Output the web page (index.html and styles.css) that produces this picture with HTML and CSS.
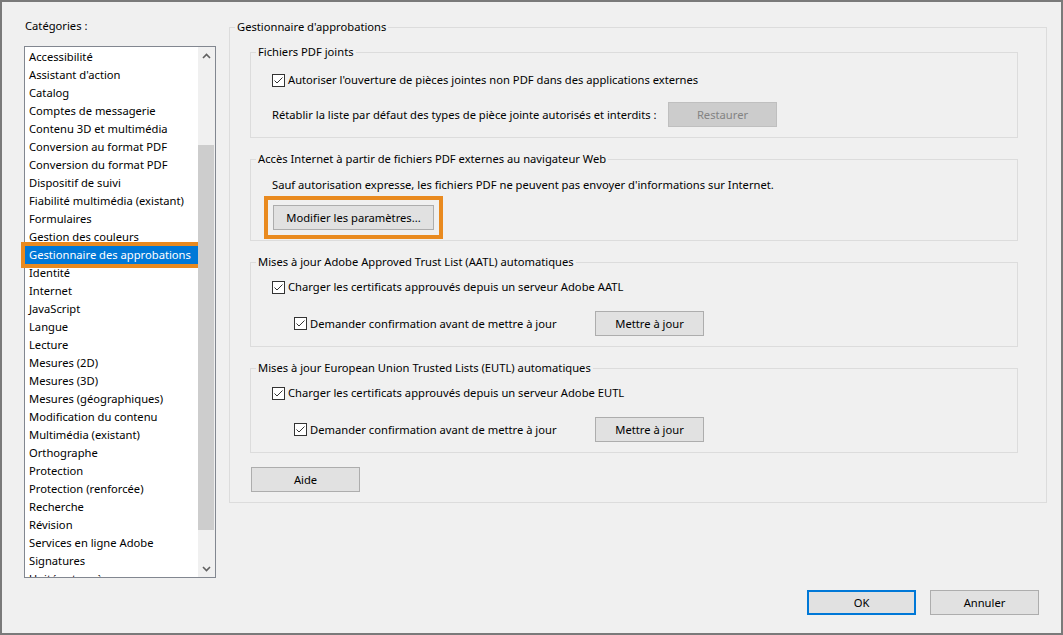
FILE: index.html
```html
<!DOCTYPE html>
<html>
<head>
    <meta charset="utf-8">
    <title>Préférences</title>
    <link rel="stylesheet" href="styles.css">
</head>
<body>
<div class="dialog">
    <div class="main">
        <div class="categories">
            <div class="cat-label">Catégories :</div>
            <div class="listbox">
                <ul class="items">
                    <li>Accessibilité</li>
                    <li>Assistant d'action</li>
                    <li>Catalog</li>
                    <li>Comptes de messagerie</li>
                    <li>Contenu 3D et multimédia</li>
                    <li>Conversion au format PDF</li>
                    <li>Conversion du format PDF</li>
                    <li>Dispositif de suivi</li>
                    <li>Fiabilité multimédia (existant)</li>
                    <li>Formulaires</li>
                    <li>Gestion des couleurs</li>
                    <li class="selected">Gestionnaire des approbations</li>
                    <li>Identité</li>
                    <li>Internet</li>
                    <li>JavaScript</li>
                    <li>Langue</li>
                    <li>Lecture</li>
                    <li>Mesures (2D)</li>
                    <li>Mesures (3D)</li>
                    <li>Mesures (géographiques)</li>
                    <li>Modification du contenu</li>
                    <li>Multimédia (existant)</li>
                    <li>Orthographe</li>
                    <li>Protection</li>
                    <li>Protection (renforcée)</li>
                    <li>Recherche</li>
                    <li>Révision</li>
                    <li>Services en ligne Adobe</li>
                    <li>Signatures</li>
                    <li>Unités et repères</li>
                </ul>
                <div class="scrollbar">
                    <div class="arrow">
                        <svg width="9" height="6" viewBox="0 0 9 6"><path d="M1 5 L4.5 1.5 L8 5" fill="none" stroke="#606060" stroke-width="1.6"/></svg>
                    </div>
                    <div class="track"><div class="thumb"></div></div>
                    <div class="arrow">
                        <svg width="9" height="6" viewBox="0 0 9 6"><path d="M1 1 L4.5 4.5 L8 1" fill="none" stroke="#606060" stroke-width="1.6"/></svg>
                    </div>
                </div>
            </div>
        </div>

        <div class="panel">
            <fieldset class="group outer">
                <legend>Gestionnaire d'approbations</legend>
                <div class="outer-body">
                    <fieldset class="group first">
                        <legend>Fichiers PDF joints</legend>
                        <div class="group-body pdf-body">
                            <label class="check">
                                <svg width="13" height="13" viewBox="0 0 13 13"><rect x="0.5" y="0.5" width="12" height="12" fill="#fff" stroke="#333"/><path d="M2.5 6.5 L5 9 L10.5 3.5" fill="none" stroke="#333"/></svg>
                                <span>Autoriser l'ouverture de pièces jointes non PDF dans des applications externes</span>
                            </label>
                            <div class="row reset-row">
                                <span class="reset-label">Rétablir la liste par défaut des types de pièce jointe autorisés et interdits :</span>
                                <button class="btn disabled">Restaurer</button>
                            </div>
                        </div>
                    </fieldset>

                    <fieldset class="group">
                        <legend>Accès Internet à partir de fichiers PDF externes au navigateur Web</legend>
                        <div class="group-body web-body">
                            <div class="text-line">Sauf autorisation expresse, les fichiers PDF ne peuvent pas envoyer d'informations sur Internet.</div>
                            <button class="btn wide marked">Modifier les paramètres...</button>
                        </div>
                    </fieldset>

                    <fieldset class="group">
                        <legend>Mises à jour Adobe Approved Trust List (AATL) automatiques</legend>
                        <div class="group-body list-body">
                            <label class="check">
                                <svg width="13" height="13" viewBox="0 0 13 13"><rect x="0.5" y="0.5" width="12" height="12" fill="#fff" stroke="#333"/><path d="M2.5 6.5 L5 9 L10.5 3.5" fill="none" stroke="#333"/></svg>
                                <span>Charger les certificats approuvés depuis un serveur Adobe AATL</span>
                            </label>
                            <div class="row sub-row">
                                <label class="check sub-check">
                                    <svg width="13" height="13" viewBox="0 0 13 13"><rect x="0.5" y="0.5" width="12" height="12" fill="#fff" stroke="#333"/><path d="M2.5 6.5 L5 9 L10.5 3.5" fill="none" stroke="#333"/></svg>
                                    <span>Demander confirmation avant de mettre à jour</span>
                                </label>
                                <button class="btn">Mettre à jour</button>
                            </div>
                        </div>
                    </fieldset>

                    <fieldset class="group">
                        <legend>Mises à jour European Union Trusted Lists (EUTL) automatiques</legend>
                        <div class="group-body list-body">
                            <label class="check">
                                <svg width="13" height="13" viewBox="0 0 13 13"><rect x="0.5" y="0.5" width="12" height="12" fill="#fff" stroke="#333"/><path d="M2.5 6.5 L5 9 L10.5 3.5" fill="none" stroke="#333"/></svg>
                                <span>Charger les certificats approuvés depuis un serveur Adobe EUTL</span>
                            </label>
                            <div class="row sub-row">
                                <label class="check sub-check">
                                    <svg width="13" height="13" viewBox="0 0 13 13"><rect x="0.5" y="0.5" width="12" height="12" fill="#fff" stroke="#333"/><path d="M2.5 6.5 L5 9 L10.5 3.5" fill="none" stroke="#333"/></svg>
                                    <span>Demander confirmation avant de mettre à jour</span>
                                </label>
                                <button class="btn">Mettre à jour</button>
                            </div>
                        </div>
                    </fieldset>

                    <button class="btn help">Aide</button>
                </div>
            </fieldset>
        </div>
    </div>

    <div class="footer">
        <button class="btn default">OK</button>
        <button class="btn">Annuler</button>
    </div>
</div>
</body>
</html>
```

FILE: styles.css
```css
* {
    margin: 0;
    padding: 0;
    box-sizing: border-box;
}

body {
    font-family: "Noto Sans", "Liberation Sans", sans-serif;
    font-size: 11.2px;
    color: #000000;
    background-color: #f0f0f0;
}

.dialog {
    display: flex;
    flex-direction: column;
    width: 1063px;
    height: 635px;
    border: 2px solid #7a7a7a;
    background-color: #f0f0f0;
}

.main {
    display: flex;
    padding: 17px 14px 0 22px;
}

/* left column */

.categories {
    width: 192px;
}

.cat-label {
    line-height: 14px;
    margin-bottom: 13px;
    padding-left: 1px;
}

.listbox {
    display: flex;
    height: 532px;
    border: 1px solid #828790;
    background-color: #ffffff;
}

.items {
    flex: 1;
    min-width: 0;
    list-style: none;
    padding-top: 1px;
    overflow-x: visible;
    overflow-y: clip;
}

.items li {
    height: 18px;
    line-height: 18px;
    padding-left: 4px;
    white-space: nowrap;
}

.items li.selected {
    background-color: #0078d7;
    color: #ffffff;
    outline: 4px solid #e98a1f;
    outline-offset: 0;
}

.scrollbar {
    display: flex;
    flex-direction: column;
    flex: none;
    width: 17px;
    background-color: #f0f0f0;
}

.arrow {
    display: flex;
    align-items: center;
    justify-content: center;
    height: 17px;
}

.track {
    flex: 1;
}

.thumb {
    margin: 81px 1px 0 0;
    height: 385px;
    background-color: #cdcdcd;
}

/* right panel */

.panel {
    flex: 1;
    margin-left: 13px;
}

.group {
    border: 1px solid #dcdcdc;
    margin-top: 13px;
}

.group legend {
    margin-left: 5px;
    padding: 0 2px;
    line-height: 16px;
}

.group.outer {
    margin-top: 0;
}

.group.first {
    margin-top: 9px;
}

.outer-body {
    padding: 0 28px 10px 20px;
}

.group-body {
    padding: 9px 20px 10px 21px;
}

.pdf-body {
    padding-top: 12px;
}

.web-body {
    padding-top: 10px;
}

.check {
    display: flex;
    align-items: center;
    gap: 3px;
    line-height: 16px;
}

.check svg {
    flex: none;
}

.row {
    display: flex;
    align-items: center;
}

.reset-row {
    margin-top: 14px;
}

.reset-label {
    width: 396px;
    white-space: nowrap;
}

.text-line {
    line-height: 16px;
}

.sub-row {
    margin-top: 16px;
    padding-left: 22px;
}

.sub-check {
    width: 301px;
}

.btn {
    width: 109px;
    height: 25px;
    font-family: inherit;
    font-size: 11.2px;
    color: #000000;
    background-color: #e1e1e1;
    border: 1px solid #adadad;
}

.btn.disabled {
    color: #838383;
    background-color: #cccccc;
    border-color: #bfbfbf;
}

.btn.wide {
    width: 161px;
    margin: 12px 0 0 1px;
}

.btn.marked {
    outline: 4px solid #e98a1f;
    outline-offset: 5px;
}

.btn.help {
    display: block;
    margin-top: 14px;
    margin-left: 1px;
}

.footer {
    display: flex;
    justify-content: flex-end;
    gap: 14px;
    margin-top: auto;
    padding: 0 22px 18px 0;
}

.btn.default {
    border: 2px solid #0078d7;
}
```
